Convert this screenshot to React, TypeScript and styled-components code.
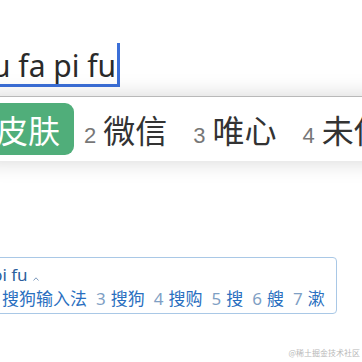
import styled, { createGlobalStyle } from 'styled-components';

const GlobalStyle = createGlobalStyle`
  html, body {
    margin: 0;
    padding: 0;
    background: #ffffff;
  }
`;

const BAR_WORDS = [
  { num: 2, word: '微信' },
  { num: 3, word: '唯心' },
  { num: 4, word: '未使用' },
];

const BOX_WORDS = [
  { num: 3, word: '搜狗' },
  { num: 4, word: '搜购' },
  { num: 5, word: '搜' },
  { num: 6, word: '艘' },
  { num: 7, word: '漱' },
];

export default function App() {
  return (
    <>
      <GlobalStyle />
      <Page>
        <InputLine>
          <Typed>u fa pi fu</Typed>
        </InputLine>

        <CandidateBar>
          <ActiveCandidate>皮肤</ActiveCandidate>
          {BAR_WORDS.map((c, i) => (
            <Candidate key={c.num} first={i === 0}>
              <CandNum>{c.num}</CandNum>
              <CandWord>{c.word}</CandWord>
            </Candidate>
          ))}
        </CandidateBar>

        <SogouBox>
          <Pinyin>
            pi fu
            <CaretMark viewBox="0 0 6 4" width="6" height="4">
              <polyline points="0.5,3.5 3,0.8 5.5,3.5" fill="none" stroke="#6f8fb5" strokeWidth="0.9" />
            </CaretMark>
          </Pinyin>
          <BoxRow>
            <BoxWord>搜狗输入法</BoxWord>
            {BOX_WORDS.map((c) => (
              <BoxItem key={c.num}>
                <BoxNum>{c.num}</BoxNum>
                <BoxWord>{c.word}</BoxWord>
              </BoxItem>
            ))}
          </BoxRow>
        </SogouBox>

        <Watermark>@稀土掘金技术社区</Watermark>
      </Page>
    </>
  );
}

const Page = styled.div`
  position: relative;
  width: 362px;
  height: 362px;
  overflow: hidden;
  padding-top: 43px;
  box-sizing: border-box;
  display: flex;
  flex-direction: column;
  align-items: flex-start;
`;

const InputLine = styled.div`
  margin-left: -8px;
  font-family: 'Noto Sans', 'Open Sans', sans-serif;
  font-size: 30px;
  color: #2a2a2a;
`;

const Typed = styled.span`
  display: inline-block;
  padding-top: 5px;
  line-height: 36px;
  padding-right: 1px;
  border-bottom: 3px solid #3b6fd8;
  border-right: 3px solid #3b6fd8;
  white-space: nowrap;
`;

const CandidateBar = styled.div`
  margin-top: 9px;
  margin-left: -20px;
  width: 440px;
  height: 64px;
  flex-shrink: 0;
  background: #ffffff;
  border-top: 1px solid #b9b9b9;
  box-shadow: 0 0 22px rgba(0, 0, 0, 0.17);
  display: flex;
  align-items: center;
  white-space: nowrap;
`;

const ActiveCandidate = styled.div`
  height: 52px;
  padding: 0 14px 0 16px;
  border-radius: 9px;
  background: #50ae7a;
  color: #ffffff;
  display: flex;
  align-items: center;
  font-family: 'Noto Sans CJK SC', sans-serif;
  font-size: 32px;
`;

const Candidate = styled.div<{ first: boolean }>`
  margin-left: ${({ first }) => (first ? '10px' : '26px')};
  display: flex;
  align-items: baseline;
  gap: 7px;
`;

const CandNum = styled.span`
  font-family: 'Liberation Sans', Arial, sans-serif;
  font-size: 22px;
  color: #777777;
`;

const CandWord = styled.span`
  font-family: 'Noto Sans CJK SC', sans-serif;
  font-size: 32px;
  color: #333333;
`;

const SogouBox = styled.div`
  margin-top: 96px;
  margin-left: -20px;
  width: 357px;
  box-sizing: border-box;
  border: 1px solid #a9c8e6;
  border-radius: 4px;
  padding: 5px 14px 3px 14px;
  white-space: nowrap;
`;

const Pinyin = styled.div`
  margin-left: -3px;
  font-family: 'Noto Sans', 'Open Sans', sans-serif;
  font-size: 17px;
  line-height: 24px;
  color: #2b5f9e;
  display: flex;
  align-items: baseline;
`;

const CaretMark = styled.svg`
  margin-left: 5px;
`;

const BoxRow = styled.div`
  padding-left: 7px;
  display: flex;
  align-items: baseline;
  line-height: 22px;
`;

const BoxItem = styled.span`
  margin-left: 9px;
  display: flex;
  align-items: baseline;
  gap: 5px;
`;

const BoxNum = styled.span`
  font-family: 'Noto Sans', sans-serif;
  font-size: 17px;
  color: #7f9fc4;
`;

const BoxWord = styled.span`
  font-family: 'Noto Sans CJK SC', sans-serif;
  font-size: 17px;
  color: #2a6fc0;
`;

const Watermark = styled.div`
  position: absolute;
  right: 2px;
  bottom: 4px;
  font-family: 'Noto Sans CJK SC', sans-serif;
  font-size: 8px;
  color: #b8b8b8;
`;
